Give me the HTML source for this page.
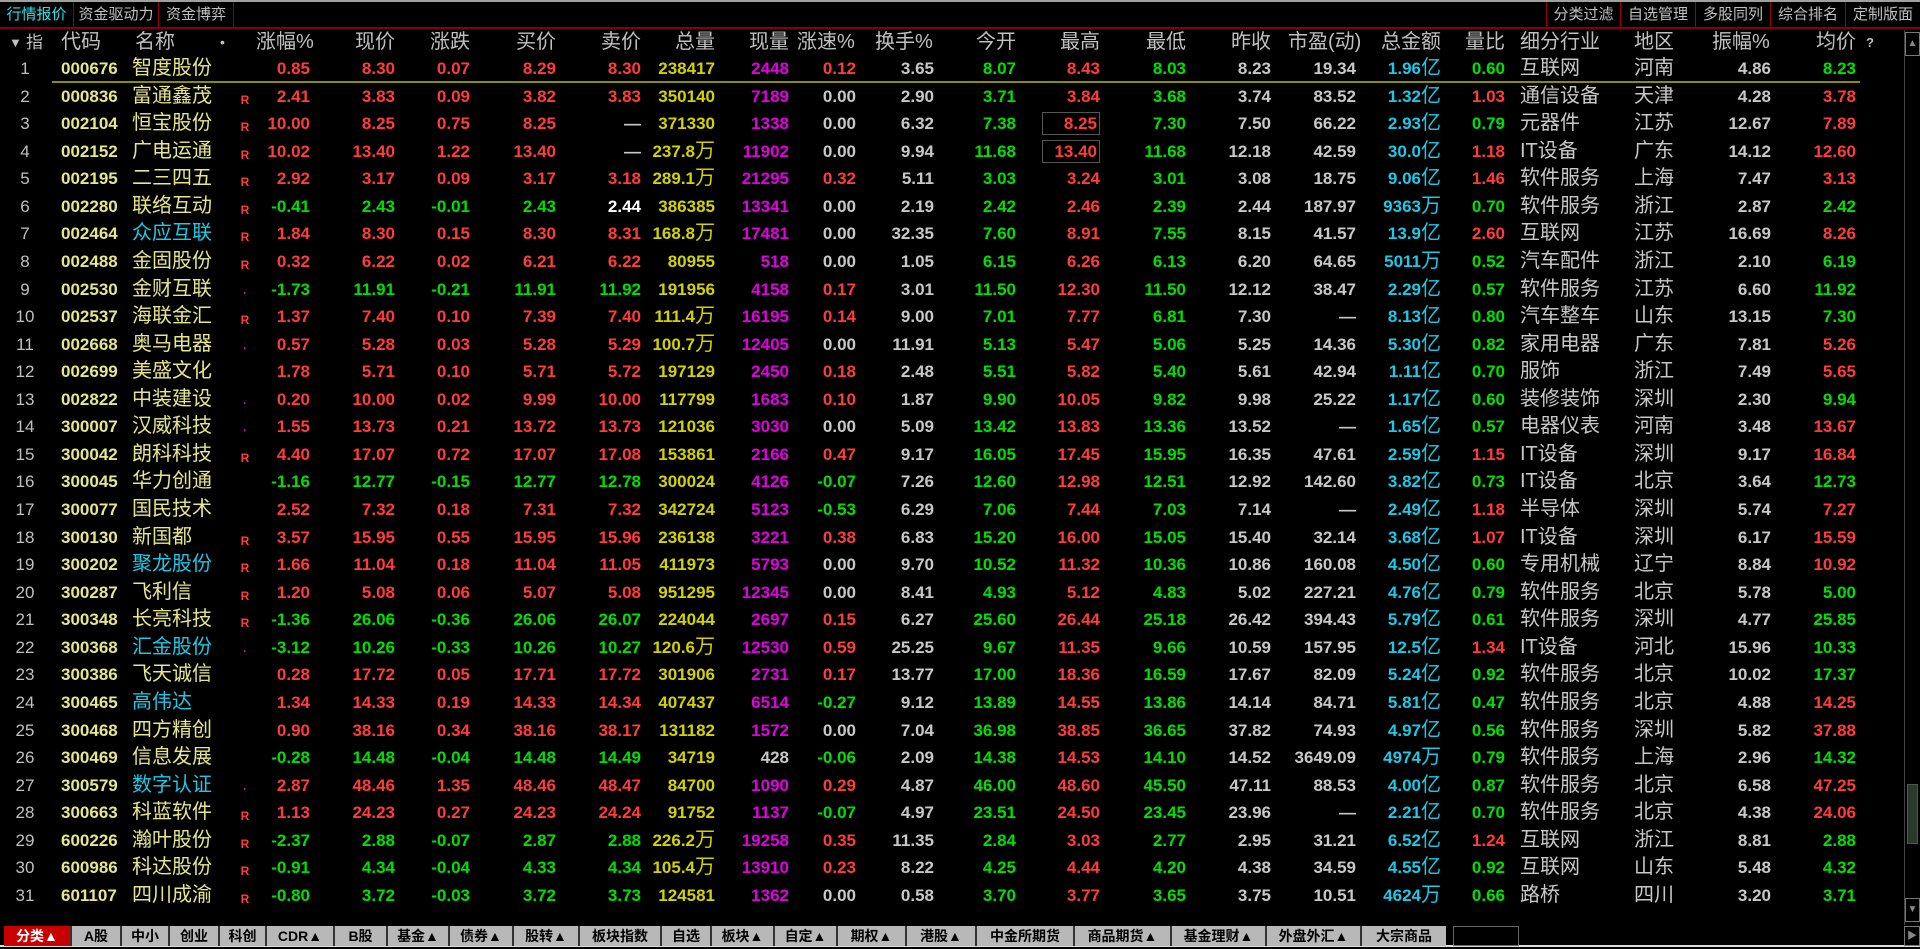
<!DOCTYPE html>
<html><head><meta charset="utf-8"><style>
*{margin:0;padding:0;box-sizing:border-box}
body{width:1920px;height:949px;background:#000;position:relative;overflow:hidden;font-family:"Liberation Sans","Noto Sans CJK SC",sans-serif;}
.topline{position:absolute;left:0;top:0;width:1920px;height:2px;background:#a0a0a0}
.tabs{position:absolute;top:2px;height:25px;font-size:15px;line-height:25px;color:#c0c0c0}
.tabs span{position:absolute;top:0;height:25px;border-right:1px solid #900;text-align:center}
.redline{position:absolute;left:0;top:27px;width:1920px;height:2px;background:#8a0000}
.hdr{position:absolute;top:29px;left:0;width:1900px;height:27px;line-height:27px;font-size:20px;color:#c0c0c0}
.hdr span{position:absolute;white-space:nowrap}
#rows{position:absolute;top:55px;left:0;width:1900px}
.rw{position:relative;height:27.57px;line-height:27px;font-size:17px;font-weight:bold;color:#ff3c3c}
.rw span{position:absolute;top:0;white-space:nowrap}
.rw span:nth-child(n+5){width:100px;text-align:right}
.rw span:nth-child(1){left:0;width:50px;text-align:center;color:#c0c0c0;font-weight:normal}
.rw span:nth-child(2){left:61px;color:#e6e68c}
.rw span:nth-child(3){left:132px;font-size:20px;font-weight:normal;color:#e6e68c}
.rw span:nth-child(4){left:238px;width:14px;font-size:12px;color:#ff3c3c;top:4px;text-align:center}
.rw span:nth-child(5){left:210px}.rw span:nth-child(6){left:295px}.rw span:nth-child(7){left:370px}
.rw span:nth-child(8){left:456px}.rw span:nth-child(9){left:541px}
.rw span:nth-child(10){left:615px;color:#d2d200}
.rw span:nth-child(11){left:689px;color:#e000e0}
.rw span:nth-child(12){left:756px}
.rw span:nth-child(13){left:834px;color:#c8c8c8}
.rw span:nth-child(14){left:916px}.rw span:nth-child(15){left:1000px}.rw span:nth-child(16){left:1086px}
.rw span:nth-child(17){left:1171px;color:#c8c8c8}
.rw span:nth-child(18){left:1256px;color:#c8c8c8}
.rw span:nth-child(19){left:1341px;color:#1ec8e6}
.rw span:nth-child(20){left:1405px}
.rw span:nth-child(21){left:1520px;width:auto;text-align:left;font-size:20px;font-weight:normal;color:#c8c8c8}
.rw span:nth-child(22){left:1634px;width:auto;text-align:left;font-size:20px;font-weight:normal;color:#c8c8c8}
.rw span:nth-child(23){left:1671px;color:#c8c8c8}
.rw span:nth-child(24){left:1756px}
.rw span.g{color:#00e000}.rw span.w{color:#c8c8c8}.rw span.ww{color:#fff}.rw span.c{color:#1ec8e6}
.u{font-size:20px;font-weight:normal}
.rw span:nth-child(3).c{color:#1ec8e6}
.dot{color:#e000e0!important}
.bx{display:inline-block;font-style:normal;width:58px;height:23px;line-height:22px;margin-top:2px;border:1px solid #555;padding-right:2px;text-align:right;vertical-align:top}
.yl{position:absolute;left:52px;top:81px;width:1808px;height:2px;background:#8c8c00}
.sb{position:absolute;left:1904px;top:30px;width:16px;height:895px;background:#000;border-left:1px solid #444}
.sbt{position:absolute;left:1905px;width:15px;height:24px;border:1px solid #777;color:#888;font-size:10px;text-align:center;line-height:22px}
.bt{position:absolute;left:0;top:925px;width:1920px;height:22px;background:#000;border-bottom:2px solid #ddd}
.bt span{position:absolute;top:1px;height:20px;background:#b8b8b8;color:#000;font-size:14px;font-weight:bold;line-height:20px;text-align:center;border-left:2px solid #333}
.bt span.on{background:#c80000;color:#fff}
</style></head><body>
<div class="topline"></div>
<div class="tabs" style="left:0;width:240px">
<span style="left:0;width:74px;color:#2ee0e8">行情报价</span>
<span style="left:74px;width:85px">资金驱动力</span>
<span style="left:159px;width:75px">资金博弈</span>
</div>
<div class="tabs" style="left:1546px;width:374px">
<span style="left:0;width:75px;border-left:1px solid #900">分类过滤</span>
<span style="left:75px;width:75px">自选管理</span>
<span style="left:150px;width:75px">多股同列</span>
<span style="left:225px;width:75px">综合排名</span>
<span style="left:300px;width:74px;border-right:none">定制版面</span>
</div>
<div class="redline"></div>
<div class="hdr">
<span style="left:9px;font-size:13px">▼</span><span style="left:26px;font-size:17px">指</span>
<span style="left:61px">代码</span><span style="left:135px">名称</span><span style="left:220px;font-size:14px">•</span>
<span style="left:256px">涨幅%</span><span style="left:355px">现价</span><span style="left:430px">涨跌</span>
<span style="left:516px">买价</span><span style="left:601px">卖价</span><span style="left:675px">总量</span>
<span style="left:749px">现量</span><span style="left:797px">涨速%</span><span style="left:875px">换手%</span>
<span style="left:976px">今开</span><span style="left:1060px">最高</span><span style="left:1146px">最低</span>
<span style="left:1231px">昨收</span><span style="left:1288px">市盈(动)</span><span style="left:1381px">总金额</span>
<span style="left:1465px">量比</span><span style="left:1520px">细分行业</span><span style="left:1634px">地区</span>
<span style="left:1712px">振幅%</span><span style="left:1816px">均价</span><span style="left:1866px;font-size:13px;font-weight:bold">?</span>
</div>
<div class="yl"></div>
<div id="rows">
<div class="rw"><span>1</span><span>000676</span><span>智度股份</span><span></span><span>0.85</span><span>8.30</span><span>0.07</span><span>8.29</span><span>8.30</span><span>238417</span><span>2448</span><span>0.12</span><span>3.65</span><span class="g">8.07</span><span>8.43</span><span class="g">8.03</span><span>8.23</span><span>19.34</span><span>1.96<b class="u">亿</b></span><span class="g">0.60</span><span>互联网</span><span>河南</span><span>4.86</span><span class="g">8.23</span></div>
<div class="rw"><span>2</span><span>000836</span><span>富通鑫茂</span><span>R</span><span>2.41</span><span>3.83</span><span>0.09</span><span>3.82</span><span>3.83</span><span>350140</span><span>7189</span><span class="w">0.00</span><span>2.90</span><span class="g">3.71</span><span>3.84</span><span class="g">3.68</span><span>3.74</span><span>83.52</span><span>1.32<b class="u">亿</b></span><span>1.03</span><span>通信设备</span><span>天津</span><span>4.28</span><span>3.78</span></div>
<div class="rw"><span>3</span><span>002104</span><span>恒宝股份</span><span>R</span><span>10.00</span><span>8.25</span><span>0.75</span><span>8.25</span><span class="w">—</span><span>371330</span><span>1338</span><span class="w">0.00</span><span>6.32</span><span class="g">7.38</span><span><i class="bx">8.25</i></span><span class="g">7.30</span><span>7.50</span><span>66.22</span><span>2.93<b class="u">亿</b></span><span class="g">0.79</span><span>元器件</span><span>江苏</span><span>12.67</span><span>7.89</span></div>
<div class="rw"><span>4</span><span>002152</span><span>广电运通</span><span>R</span><span>10.02</span><span>13.40</span><span>1.22</span><span>13.40</span><span class="w">—</span><span>237.8<b class="u">万</b></span><span>11902</span><span class="w">0.00</span><span>9.94</span><span class="g">11.68</span><span><i class="bx">13.40</i></span><span class="g">11.68</span><span>12.18</span><span>42.59</span><span>30.0<b class="u">亿</b></span><span>1.18</span><span>IT设备</span><span>广东</span><span>14.12</span><span>12.60</span></div>
<div class="rw"><span>5</span><span>002195</span><span>二三四五</span><span>R</span><span>2.92</span><span>3.17</span><span>0.09</span><span>3.17</span><span>3.18</span><span>289.1<b class="u">万</b></span><span>21295</span><span>0.32</span><span>5.11</span><span class="g">3.03</span><span>3.24</span><span class="g">3.01</span><span>3.08</span><span>18.75</span><span>9.06<b class="u">亿</b></span><span>1.46</span><span>软件服务</span><span>上海</span><span>7.47</span><span>3.13</span></div>
<div class="rw"><span>6</span><span>002280</span><span>联络互动</span><span>R</span><span class="g">-0.41</span><span class="g">2.43</span><span class="g">-0.01</span><span class="g">2.43</span><span class="ww">2.44</span><span>386385</span><span>13341</span><span class="w">0.00</span><span>2.19</span><span class="g">2.42</span><span>2.46</span><span class="g">2.39</span><span>2.44</span><span>187.97</span><span>9363<b class="u">万</b></span><span class="g">0.70</span><span>软件服务</span><span>浙江</span><span>2.87</span><span class="g">2.42</span></div>
<div class="rw"><span>7</span><span>002464</span><span class="c">众应互联</span><span>R</span><span>1.84</span><span>8.30</span><span>0.15</span><span>8.30</span><span>8.31</span><span>168.8<b class="u">万</b></span><span>17481</span><span class="w">0.00</span><span>32.35</span><span class="g">7.60</span><span>8.91</span><span class="g">7.55</span><span>8.15</span><span>41.57</span><span>13.9<b class="u">亿</b></span><span>2.60</span><span>互联网</span><span>江苏</span><span>16.69</span><span>8.26</span></div>
<div class="rw"><span>8</span><span>002488</span><span>金固股份</span><span>R</span><span>0.32</span><span>6.22</span><span>0.02</span><span>6.21</span><span>6.22</span><span>80955</span><span>518</span><span class="w">0.00</span><span>1.05</span><span class="g">6.15</span><span>6.26</span><span class="g">6.13</span><span>6.20</span><span>64.65</span><span>5011<b class="u">万</b></span><span class="g">0.52</span><span>汽车配件</span><span>浙江</span><span>2.10</span><span class="g">6.19</span></div>
<div class="rw"><span>9</span><span>002530</span><span>金财互联</span><span class="dot">·</span><span class="g">-1.73</span><span class="g">11.91</span><span class="g">-0.21</span><span class="g">11.91</span><span class="g">11.92</span><span>191956</span><span>4158</span><span>0.17</span><span>3.01</span><span class="g">11.50</span><span>12.30</span><span class="g">11.50</span><span>12.12</span><span>38.47</span><span>2.29<b class="u">亿</b></span><span class="g">0.57</span><span>软件服务</span><span>江苏</span><span>6.60</span><span class="g">11.92</span></div>
<div class="rw"><span>10</span><span>002537</span><span>海联金汇</span><span>R</span><span>1.37</span><span>7.40</span><span>0.10</span><span>7.39</span><span>7.40</span><span>111.4<b class="u">万</b></span><span>16195</span><span>0.14</span><span>9.00</span><span class="g">7.01</span><span>7.77</span><span class="g">6.81</span><span>7.30</span><span>—</span><span>8.13<b class="u">亿</b></span><span class="g">0.80</span><span>汽车整车</span><span>山东</span><span>13.15</span><span class="g">7.30</span></div>
<div class="rw"><span>11</span><span>002668</span><span>奥马电器</span><span class="dot">·</span><span>0.57</span><span>5.28</span><span>0.03</span><span>5.28</span><span>5.29</span><span>100.7<b class="u">万</b></span><span>12405</span><span class="w">0.00</span><span>11.91</span><span class="g">5.13</span><span>5.47</span><span class="g">5.06</span><span>5.25</span><span>14.36</span><span>5.30<b class="u">亿</b></span><span class="g">0.82</span><span>家用电器</span><span>广东</span><span>7.81</span><span>5.26</span></div>
<div class="rw"><span>12</span><span>002699</span><span>美盛文化</span><span></span><span>1.78</span><span>5.71</span><span>0.10</span><span>5.71</span><span>5.72</span><span>197129</span><span>2450</span><span>0.18</span><span>2.48</span><span class="g">5.51</span><span>5.82</span><span class="g">5.40</span><span>5.61</span><span>42.94</span><span>1.11<b class="u">亿</b></span><span class="g">0.70</span><span>服饰</span><span>浙江</span><span>7.49</span><span>5.65</span></div>
<div class="rw"><span>13</span><span>002822</span><span>中装建设</span><span class="dot">·</span><span>0.20</span><span>10.00</span><span>0.02</span><span>9.99</span><span>10.00</span><span>117799</span><span>1683</span><span>0.10</span><span>1.87</span><span class="g">9.90</span><span>10.05</span><span class="g">9.82</span><span>9.98</span><span>25.22</span><span>1.17<b class="u">亿</b></span><span class="g">0.60</span><span>装修装饰</span><span>深圳</span><span>2.30</span><span class="g">9.94</span></div>
<div class="rw"><span>14</span><span>300007</span><span>汉威科技</span><span class="dot">·</span><span>1.55</span><span>13.73</span><span>0.21</span><span>13.72</span><span>13.73</span><span>121036</span><span>3030</span><span class="w">0.00</span><span>5.09</span><span class="g">13.42</span><span>13.83</span><span class="g">13.36</span><span>13.52</span><span>—</span><span>1.65<b class="u">亿</b></span><span class="g">0.57</span><span>电器仪表</span><span>河南</span><span>3.48</span><span>13.67</span></div>
<div class="rw"><span>15</span><span>300042</span><span>朗科科技</span><span>R</span><span>4.40</span><span>17.07</span><span>0.72</span><span>17.07</span><span>17.08</span><span>153861</span><span>2166</span><span>0.47</span><span>9.17</span><span class="g">16.05</span><span>17.45</span><span class="g">15.95</span><span>16.35</span><span>47.61</span><span>2.59<b class="u">亿</b></span><span>1.15</span><span>IT设备</span><span>深圳</span><span>9.17</span><span>16.84</span></div>
<div class="rw"><span>16</span><span>300045</span><span>华力创通</span><span></span><span class="g">-1.16</span><span class="g">12.77</span><span class="g">-0.15</span><span class="g">12.77</span><span class="g">12.78</span><span>300024</span><span>4126</span><span class="g">-0.07</span><span>7.26</span><span class="g">12.60</span><span>12.98</span><span class="g">12.51</span><span>12.92</span><span>142.60</span><span>3.82<b class="u">亿</b></span><span class="g">0.73</span><span>IT设备</span><span>北京</span><span>3.64</span><span class="g">12.73</span></div>
<div class="rw"><span>17</span><span>300077</span><span>国民技术</span><span></span><span>2.52</span><span>7.32</span><span>0.18</span><span>7.31</span><span>7.32</span><span>342724</span><span>5123</span><span class="g">-0.53</span><span>6.29</span><span class="g">7.06</span><span>7.44</span><span class="g">7.03</span><span>7.14</span><span>—</span><span>2.49<b class="u">亿</b></span><span>1.18</span><span>半导体</span><span>深圳</span><span>5.74</span><span>7.27</span></div>
<div class="rw"><span>18</span><span>300130</span><span>新国都</span><span>R</span><span>3.57</span><span>15.95</span><span>0.55</span><span>15.95</span><span>15.96</span><span>236138</span><span>3221</span><span>0.38</span><span>6.83</span><span class="g">15.20</span><span>16.00</span><span class="g">15.05</span><span>15.40</span><span>32.14</span><span>3.68<b class="u">亿</b></span><span>1.07</span><span>IT设备</span><span>深圳</span><span>6.17</span><span>15.59</span></div>
<div class="rw"><span>19</span><span>300202</span><span class="c">聚龙股份</span><span>R</span><span>1.66</span><span>11.04</span><span>0.18</span><span>11.04</span><span>11.05</span><span>411973</span><span>5793</span><span class="w">0.00</span><span>9.70</span><span class="g">10.52</span><span>11.32</span><span class="g">10.36</span><span>10.86</span><span>160.08</span><span>4.50<b class="u">亿</b></span><span class="g">0.60</span><span>专用机械</span><span>辽宁</span><span>8.84</span><span>10.92</span></div>
<div class="rw"><span>20</span><span>300287</span><span>飞利信</span><span>R</span><span>1.20</span><span>5.08</span><span>0.06</span><span>5.07</span><span>5.08</span><span>951295</span><span>12345</span><span class="w">0.00</span><span>8.41</span><span class="g">4.93</span><span>5.12</span><span class="g">4.83</span><span>5.02</span><span>227.21</span><span>4.76<b class="u">亿</b></span><span class="g">0.79</span><span>软件服务</span><span>北京</span><span>5.78</span><span class="g">5.00</span></div>
<div class="rw"><span>21</span><span>300348</span><span>长亮科技</span><span>R</span><span class="g">-1.36</span><span class="g">26.06</span><span class="g">-0.36</span><span class="g">26.06</span><span class="g">26.07</span><span>224044</span><span>2697</span><span>0.15</span><span>6.27</span><span class="g">25.60</span><span>26.44</span><span class="g">25.18</span><span>26.42</span><span>394.43</span><span>5.79<b class="u">亿</b></span><span class="g">0.61</span><span>软件服务</span><span>深圳</span><span>4.77</span><span class="g">25.85</span></div>
<div class="rw"><span>22</span><span>300368</span><span class="c">汇金股份</span><span class="dot">·</span><span class="g">-3.12</span><span class="g">10.26</span><span class="g">-0.33</span><span class="g">10.26</span><span class="g">10.27</span><span>120.6<b class="u">万</b></span><span>12530</span><span>0.59</span><span>25.25</span><span class="g">9.67</span><span>11.35</span><span class="g">9.66</span><span>10.59</span><span>157.95</span><span>12.5<b class="u">亿</b></span><span>1.34</span><span>IT设备</span><span>河北</span><span>15.96</span><span class="g">10.33</span></div>
<div class="rw"><span>23</span><span>300386</span><span>飞天诚信</span><span></span><span>0.28</span><span>17.72</span><span>0.05</span><span>17.71</span><span>17.72</span><span>301906</span><span>2731</span><span>0.17</span><span>13.77</span><span class="g">17.00</span><span>18.36</span><span class="g">16.59</span><span>17.67</span><span>82.09</span><span>5.24<b class="u">亿</b></span><span class="g">0.92</span><span>软件服务</span><span>北京</span><span>10.02</span><span class="g">17.37</span></div>
<div class="rw"><span>24</span><span>300465</span><span class="c">高伟达</span><span></span><span>1.34</span><span>14.33</span><span>0.19</span><span>14.33</span><span>14.34</span><span>407437</span><span>6514</span><span class="g">-0.27</span><span>9.12</span><span class="g">13.89</span><span>14.55</span><span class="g">13.86</span><span>14.14</span><span>84.71</span><span>5.81<b class="u">亿</b></span><span class="g">0.47</span><span>软件服务</span><span>北京</span><span>4.88</span><span>14.25</span></div>
<div class="rw"><span>25</span><span>300468</span><span>四方精创</span><span></span><span>0.90</span><span>38.16</span><span>0.34</span><span>38.16</span><span>38.17</span><span>131182</span><span>1572</span><span class="w">0.00</span><span>7.04</span><span class="g">36.98</span><span>38.85</span><span class="g">36.65</span><span>37.82</span><span>74.93</span><span>4.97<b class="u">亿</b></span><span class="g">0.56</span><span>软件服务</span><span>深圳</span><span>5.82</span><span>37.88</span></div>
<div class="rw"><span>26</span><span>300469</span><span>信息发展</span><span></span><span class="g">-0.28</span><span class="g">14.48</span><span class="g">-0.04</span><span class="g">14.48</span><span class="g">14.49</span><span>34719</span><span class="w">428</span><span class="g">-0.06</span><span>2.09</span><span class="g">14.38</span><span>14.53</span><span class="g">14.10</span><span>14.52</span><span>3649.09</span><span>4974<b class="u">万</b></span><span class="g">0.79</span><span>软件服务</span><span>上海</span><span>2.96</span><span class="g">14.32</span></div>
<div class="rw"><span>27</span><span>300579</span><span class="c">数字认证</span><span class="dot">·</span><span>2.87</span><span>48.46</span><span>1.35</span><span>48.46</span><span>48.47</span><span>84700</span><span>1090</span><span>0.29</span><span>4.87</span><span class="g">46.00</span><span>48.60</span><span class="g">45.50</span><span>47.11</span><span>88.53</span><span>4.00<b class="u">亿</b></span><span class="g">0.87</span><span>软件服务</span><span>北京</span><span>6.58</span><span>47.25</span></div>
<div class="rw"><span>28</span><span>300663</span><span>科蓝软件</span><span>R</span><span>1.13</span><span>24.23</span><span>0.27</span><span>24.23</span><span>24.24</span><span>91752</span><span>1137</span><span class="g">-0.07</span><span>4.97</span><span class="g">23.51</span><span>24.50</span><span class="g">23.45</span><span>23.96</span><span>—</span><span>2.21<b class="u">亿</b></span><span class="g">0.70</span><span>软件服务</span><span>北京</span><span>4.38</span><span>24.06</span></div>
<div class="rw"><span>29</span><span>600226</span><span>瀚叶股份</span><span>R</span><span class="g">-2.37</span><span class="g">2.88</span><span class="g">-0.07</span><span class="g">2.87</span><span class="g">2.88</span><span>226.2<b class="u">万</b></span><span>19258</span><span>0.35</span><span>11.35</span><span class="g">2.84</span><span>3.03</span><span class="g">2.77</span><span>2.95</span><span>31.21</span><span>6.52<b class="u">亿</b></span><span>1.24</span><span>互联网</span><span>浙江</span><span>8.81</span><span class="g">2.88</span></div>
<div class="rw"><span>30</span><span>600986</span><span>科达股份</span><span>R</span><span class="g">-0.91</span><span class="g">4.34</span><span class="g">-0.04</span><span class="g">4.33</span><span class="g">4.34</span><span>105.4<b class="u">万</b></span><span>13910</span><span>0.23</span><span>8.22</span><span class="g">4.25</span><span>4.44</span><span class="g">4.20</span><span>4.38</span><span>34.59</span><span>4.55<b class="u">亿</b></span><span class="g">0.92</span><span>互联网</span><span>山东</span><span>5.48</span><span class="g">4.32</span></div>
<div class="rw"><span>31</span><span>601107</span><span>四川成渝</span><span>R</span><span class="g">-0.80</span><span class="g">3.72</span><span class="g">-0.03</span><span class="g">3.72</span><span class="g">3.73</span><span>124581</span><span>1362</span><span class="w">0.00</span><span>0.58</span><span class="g">3.70</span><span>3.77</span><span class="g">3.65</span><span>3.75</span><span>10.51</span><span>4624<b class="u">万</b></span><span class="g">0.66</span><span>路桥</span><span>四川</span><span>3.20</span><span class="g">3.71</span></div>
</div>
<div class="sb"></div>
<div class="sbt" style="top:32px">▲</div>
<div style="position:absolute;left:1907px;top:784px;width:11px;height:60px;background:#2a3a2a;border:1px solid #4a5a4a"></div>
<div class="sbt" style="top:898px">▼</div>
<div class="bt">
<span class="on" style="left:4px;width:66px;border-left:none">分类▲</span>
<span style="left:70px;width:50px">A股</span>
<span style="left:120px;width:48px">中小</span>
<span style="left:168px;width:50px">创业</span>
<span style="left:218px;width:47px">科创</span>
<span style="left:265px;width:68px">CDR▲</span>
<span style="left:333px;width:53px">B股</span>
<span style="left:386px;width:62px">基金▲</span>
<span style="left:448px;width:64px">债券▲</span>
<span style="left:512px;width:66px">股转▲</span>
<span style="left:578px;width:82px">板块指数</span>
<span style="left:660px;width:50px">自选</span>
<span style="left:710px;width:63px">板块▲</span>
<span style="left:773px;width:63px">自定▲</span>
<span style="left:836px;width:69px">期权▲</span>
<span style="left:905px;width:70px">港股▲</span>
<span style="left:975px;width:98px">中金所期货</span>
<span style="left:1073px;width:97px">商品期货▲</span>
<span style="left:1170px;width:95px">基金理财▲</span>
<span style="left:1265px;width:95px">外盘外汇▲</span>
<span style="left:1360px;width:86px">大宗商品</span>
<span style="left:1453px;width:66px;background:#000;border:1px solid #666"></span>
<span style="left:1904px;width:16px;background:#000;border:1px solid #777;color:#888;font-size:10px">▶</span>
</div>
</body></html>
